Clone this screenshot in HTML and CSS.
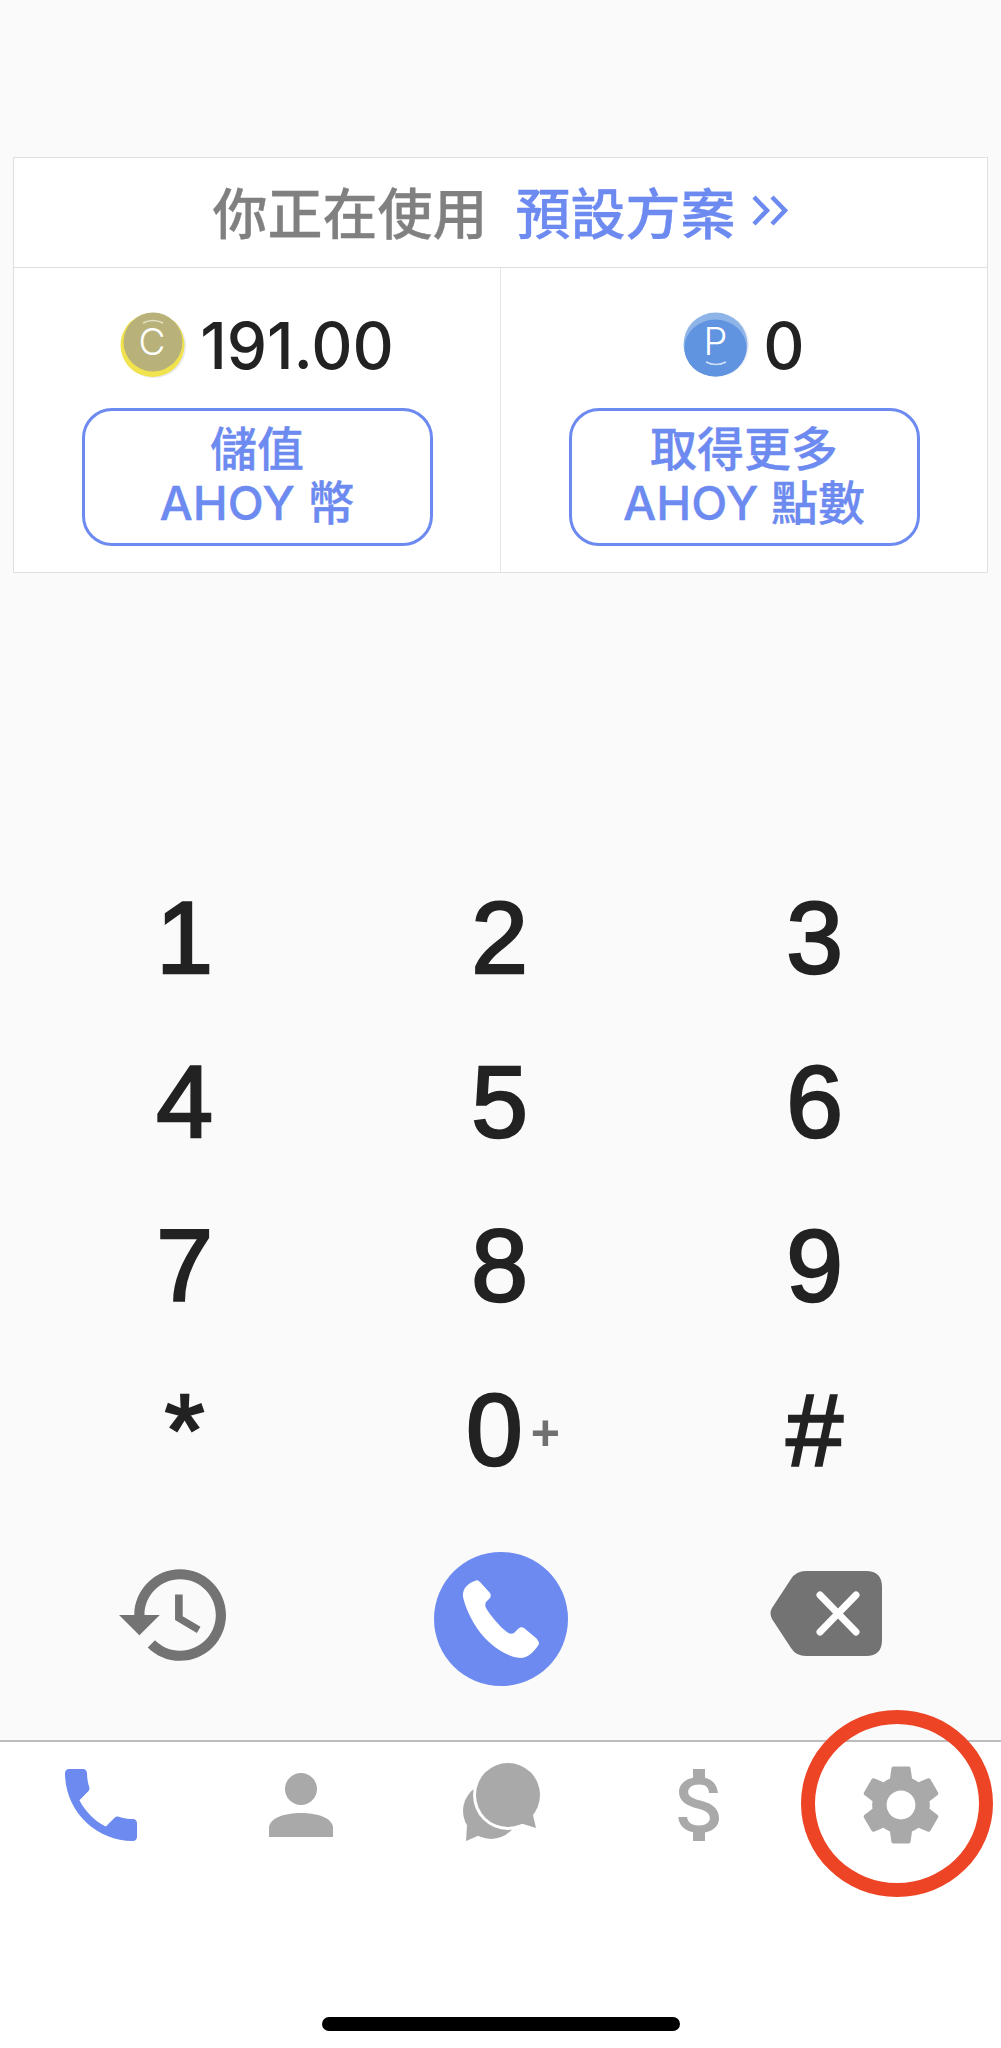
FILE: index.html
```html
<!DOCTYPE html>
<html lang="zh-Hant">
<head>
  <meta charset="UTF-8" />
  <meta name="viewport" content="width=device-width, initial-scale=1.0"/>
  <title>AHOY 撥號</title>
  <link rel="stylesheet" href="styles.css">
</head>
<body>

<main class="dial-page">
  <section class="plan-card">
    <div class="plan-head">
      <span class="plan-label">你正在使用</span>
      <a class="plan-link" href="#">預設方案</a>
      <svg class="plan-arrows" viewBox="0 0 38 31" width="38" height="31">
        <path d="M3 2 L16 15.5 L3 29 M21 2 L34 15.5 L21 29" fill="none" stroke="currentColor" stroke-width="4.5"/>
      </svg>
    </div>
    <div class="plan-cells">
      <div class="plan-cell">
        <div class="balance">
          <svg class="coin" viewBox="0 0 66 66" width="66" height="66">
            <circle cx="34" cy="34" r="32" fill="#e9e9ee"/>
            <circle cx="32.500" cy="33" r="32" fill="#f0e34e"/>
            <circle cx="33" cy="30" r="29.500" fill="#b8b27a"/>
            <path d="M23 11 Q33 6 43 11" fill="none" stroke="#e4e1c4" stroke-width="1.500"/>
            <text class="coin-letter" x="32" y="43" font-size="37">C</text>
          </svg>
          <span class="amount">191.00</span>
        </div>
        <a class="top-up" href="#">儲值<br>AHOY 幣</a>
      </div>
      <div class="plan-cell">
        <div class="balance">
          <svg class="coin" viewBox="0 0 66 66" width="66" height="66">
            <circle cx="34" cy="33" r="32" fill="#e9eef6"/>
            <circle cx="32.500" cy="32.500" r="32" fill="#8fb5e8"/>
            <ellipse cx="32.500" cy="36" rx="31" ry="28.500" fill="#6093e0"/>
            <path d="M23 50 Q33 55 43 50" fill="none" stroke="#cfe0f6" stroke-width="1.500"/>
            <text class="coin-letter" x="32.500" y="43" font-size="38">P</text>
          </svg>
          <span class="amount">0</span>
        </div>
        <a class="top-up" href="#">取得更多<br>AHOY 點數</a>
      </div>
    </div>
  </section>

  <section class="keypad">
    <button class="key">1</button>
    <button class="key">2</button>
    <button class="key">3</button>
    <button class="key">4</button>
    <button class="key">5</button>
    <button class="key">6</button>
    <button class="key">7</button>
    <button class="key">8</button>
    <button class="key">9</button>
    <button class="key">*</button>
    <button class="key key-zero">0<span class="key-plus">+</span></button>
    <button class="key">#</button>
  </section>

  <section class="dial-actions">
    <button class="action action-history">
      <svg viewBox="1 3 21 18" width="107" height="92">
        <path d="M13 3c-4.970 0-9 4.030-9 9H1l3.890 3.890.07.140L9 12H6c0-3.870 3.130-7 7-7s7 3.130 7 7-3.130 7-7 7c-1.930 0-3.680-.79-4.940-2.060l-1.420 1.420C8.270 19.990 10.510 21 13 21c4.970 0 9-4.030 9-9s-4.030-9-9-9zm-1 5v5l4.280 2.540.72-1.210-3.500-2.080V8H12z"/>
      </svg>
    </button>
    <button class="action action-call">
      <svg viewBox="0 0 78 79" width="78" height="79">
        <path d="M13 1 C6 3 0 9 1 17 C4 30 12 46 22 57 C32 68 46 77 58 78 C66 78 72 72 77 64 C77 62 76 60 74 58 L62 48 C60 47 58 47 56 49 L52 53 C50 54 47 54 45 52 C38 47 28 35 24 28 C23 26 23 24 24 22 L28 18 C29 16 29 15 28 13 L18 2 C16 0 14 0 13 1 Z"/>
      </svg>
    </button>
    <button class="action action-erase">
      <svg viewBox="0 0 112 85" width="112" height="85">
        <path d="M36 0 H96 Q112 0 112 16 V69 Q112 85 96 85 H36 Q26 85 21 77 L2 48 Q-1 42 2 37 L21 8 Q26 0 36 0 Z"/>
        <path d="M50 24 L86 61 M86 24 L50 61" fill="none" stroke="#fff" stroke-width="7" stroke-linecap="round"/>
      </svg>
    </button>
  </section>
</main>

<nav class="tab-bar">
  <a class="tab tab-active" href="#">
    <svg viewBox="0 0 24 24" width="96" height="96">
      <path d="M6.620 10.790c1.440 2.830 3.760 5.140 6.590 6.590l2.200-2.200c.27-.27.67-.36 1.020-.24 1.120.37 2.330.57 3.570.57.55 0 1 .45 1 1V20c0 .55-.45 1-1 1-9.390 0-17-7.610-17-17 0-.55.45-1 1-1h3.500c.55 0 1 .45 1 1 0 1.250.2 2.450.57 3.570.11.350.03.740-.25 1.020l-2.200 2.200z"/>
    </svg>
  </a>
  <a class="tab" href="#">
    <svg viewBox="0 0 64 64" width="64" height="64">
      <circle cx="32" cy="16" r="16"/>
      <path d="M0 64 V55 C0 45 16 40 32 40 S64 45 64 55 V64 Z"/>
    </svg>
  </a>
  <a class="tab tab-chat" href="#">
    <svg viewBox="0 0 78 79" width="78" height="79">
      <circle cx="29" cy="48" r="28"/>
      <path d="M5 62 L4 78 L18 72 Z"/>
      <circle cx="46" cy="32" r="35" fill="#fff"/>
      <circle cx="46" cy="32" r="32"/>
      <path d="M58 60 L74 65 L70 48 Z"/>
    </svg>
  </a>
  <a class="tab" href="#">
    <svg viewBox="0 0 24 24" width="96" height="96">
      <path d="M11.800 10.900c-2.270-.59-3-1.200-3-2.150 0-1.090 1.010-1.850 2.700-1.850 1.780 0 2.440.85 2.500 2.100h2.210c-.07-1.720-1.120-3.300-3.210-3.810V3h-3v2.160c-1.940.42-3.500 1.680-3.500 3.610 0 2.310 1.910 3.460 4.700 4.130 2.500.6 3 1.480 3 2.410 0 .69-.49 1.790-2.700 1.790-2.060 0-2.870-.92-2.980-2.100h-2.200c.12 2.190 1.760 3.420 3.680 3.830V21h3v-2.150c1.950-.37 3.500-1.500 3.500-3.550 0-2.840-2.430-3.810-4.700-4.400z"/>
    </svg>
  </a>
  <a class="tab tab-settings" href="#">
    <svg viewBox="0 0 24 24" width="96" height="96">
      <path d="M19.140 12.940c.04-.3.06-.61.06-.94 0-.32-.02-.64-.07-.94l2.030-1.580c.18-.14.23-.41.12-.61l-1.920-3.320c-.12-.22-.37-.29-.59-.22l-2.390.96c-.5-.38-1.030-.7-1.620-.94l-.36-2.540c-.04-.24-.24-.41-.48-.41h-3.840c-.24 0-.43.17-.47.41l-.36 2.540c-.59.24-1.130.57-1.620.94l-2.390-.96c-.22-.08-.47 0-.59.22L2.740 8.870c-.12.21-.08.47.12.61l2.030 1.580c-.05.3-.09.63-.09.94s.02.64.07.94l-2.030 1.580c-.18.14-.23.41-.12.61l1.920 3.320c.12.22.37.29.59.22l2.390-.96c.5.38 1.030.7 1.620.94l.36 2.540c.05.24.24.41.48.41h3.840c.24 0 .44-.17.47-.41l.36-2.540c.59-.24 1.130-.56 1.620-.94l2.390.96c.22.08.47 0 .59-.22l1.920-3.320c.12-.22.07-.47-.12-.61l-2.010-1.580zM12 15.600c-1.980 0-3.600-1.620-3.600-3.600s1.620-3.600 3.600-3.600 3.600 1.620 3.600 3.600-1.620 3.600-3.600 3.600z"/>
    </svg>
    <span class="tab-ring"></span>
  </a>
</nav>

<div class="home-bar"></div>

</body>
</html>
```

FILE: styles.css
```css
body {
  margin: 0;
  padding: 0;
  height: 2048px;
  overflow: hidden;
  background-color: #ffffff;
  font-family: Inter, 'Noto Sans CJK TC', sans-serif;
}

button {
  padding: 0;
  border: none;
  background: none;
  cursor: pointer;
}

a {
  text-decoration: none;
}

.dial-page {
  box-sizing: border-box;
  height: 1741px;
  padding: 157px 13px 0;
  background-color: #fafafa;
}

/* plan card */
.plan-card {
  background-color: #ffffff;
  border: 1.5px solid #e0e0e0;
}

.plan-head {
  box-sizing: border-box;
  display: flex;
  align-items: center;
  justify-content: center;
  height: 110px;
  padding-bottom: 5px;
  font-size: 55px;
  font-weight: 500;
  -webkit-text-stroke: 0.3px;
  border-bottom: 1.5px solid #dedede;
}

.plan-label {
  color: #808080;
  margin-right: 28px;
}

.plan-link {
  color: #6c8af0;
  margin-right: 15px;
}

.plan-arrows {
  color: #6c8af0;
}

.plan-cells {
  display: flex;
}

.plan-cell {
  flex: 1;
  display: flex;
  flex-direction: column;
  align-items: center;
  padding: 44px 0 26px;
}

.plan-cell + .plan-cell {
  border-left: 1.5px solid #e6e6e6;
}

.balance {
  display: flex;
  align-items: center;
  gap: 14px;
  height: 66px;
  margin-bottom: 30px;
}

.amount {
  font-size: 64px;
  font-weight: 500;
  color: #222222;
}

.coin-letter {
  font-family: Inter, sans-serif;
  font-weight: 300;
  fill: #ffffff;
  text-anchor: middle;
}

.top-up {
  box-sizing: border-box;
  display: flex;
  align-items: center;
  justify-content: center;
  width: 351px;
  height: 138px;
  padding-bottom: 3px;
  border: 3px solid #6c8af0;
  border-radius: 30px;
  color: #6c8af0;
  font-size: 47px;
  font-weight: 500;
  -webkit-text-stroke: 0.3px;
  line-height: 54px;
  text-align: center;
}

/* keypad */
.keypad {
  display: grid;
  grid-template-columns: repeat(3, 315px);
  grid-auto-rows: 164px;
  margin: 283px 0 0 14px;
}

.key {
  display: flex;
  align-items: center;
  justify-content: center;
  font-family: 'Liberation Sans', sans-serif;
  font-size: 102px;
  color: #222222;
  -webkit-text-stroke: 2.5px #222222;
}

.key-zero {
  gap: 8px;
  padding-left: 27px;
}

.key-plus {
  margin-top: 6px;
  font-size: 50px;
  font-weight: 700;
  color: #707070;
  -webkit-text-stroke: 0;
}

.dial-actions {
  display: grid;
  grid-template-columns: repeat(3, 315px);
  margin: 40px 0 0 14px;
}

.action {
  display: flex;
  align-items: center;
  justify-content: center;
  height: 134px;
}

.action-history svg {
  fill: #737373;
  margin: 0 25px 9px 0;
}

.action-erase svg {
  fill: #737373;
  margin: 0 0 12px 22px;
}

.action-call {
  width: 134px;
  margin-left: 3px;
  justify-self: center;
  border-radius: 50%;
  background-color: #6c8af0;
}

.action-call svg {
  fill: #ffffff;
}

/* bottom tabs */
.tab-bar {
  display: flex;
  border-top: 2px solid #bdbdbd;
  margin-top: -1px;
  padding: 15px 0 0 1px;
}

.tab {
  position: relative;
  flex: 1;
  display: flex;
  align-items: center;
  justify-content: center;
  height: 96px;
  fill: #a9a9a9;
}

.tab-active {
  fill: #6c8af0;
}

.tab-chat svg {
  margin-bottom: 6px;
}

.tab-ring {
  position: absolute;
  left: 0;
  top: -47px;
  box-sizing: border-box;
  width: 192px;
  height: 187px;
  border: 14px solid #ed4426;
  border-radius: 50%;
}

.home-bar {
  width: 358px;
  height: 14px;
  margin: 164px auto 0;
  border-radius: 7px;
  background-color: #000000;
}
```
